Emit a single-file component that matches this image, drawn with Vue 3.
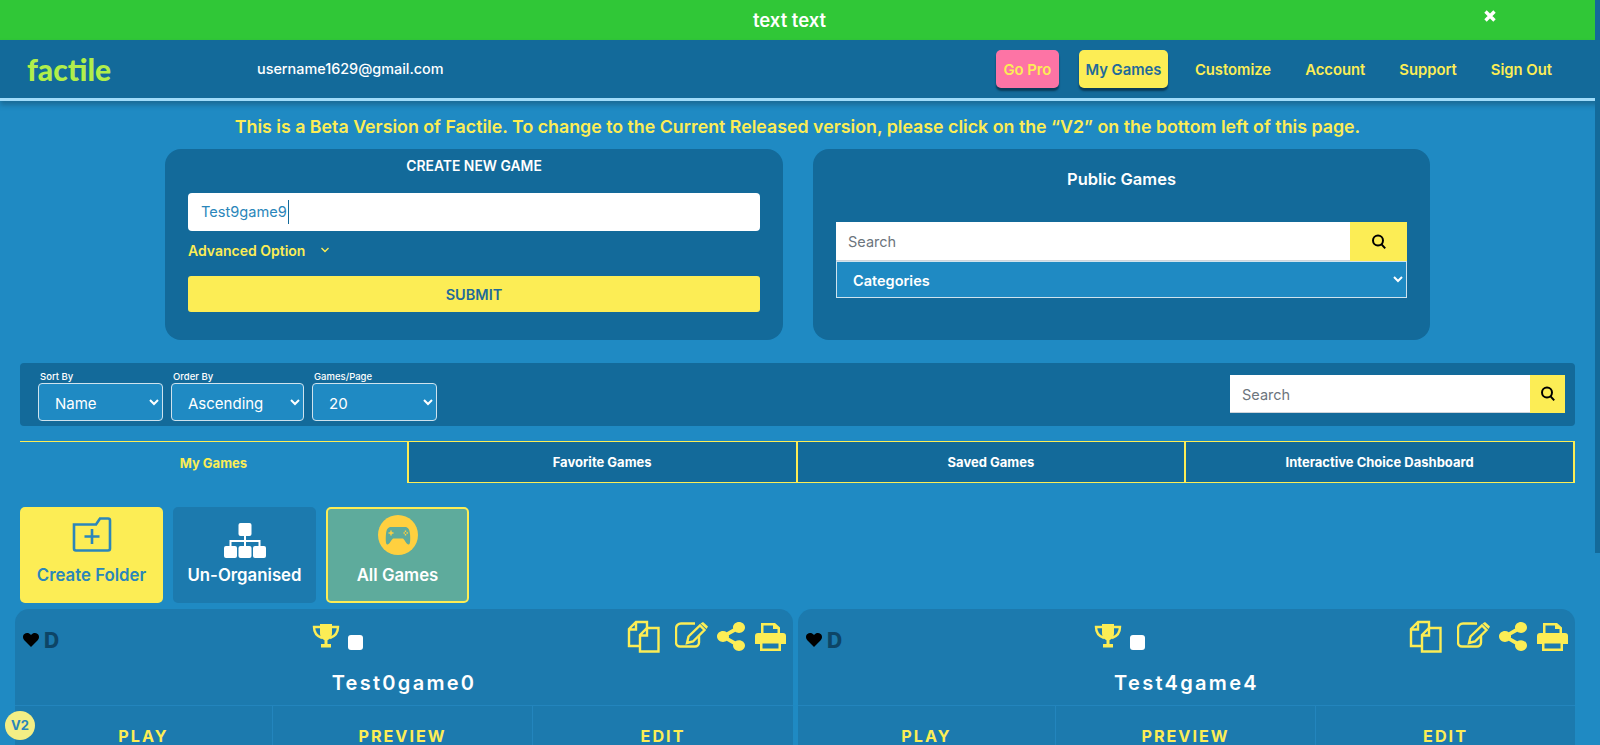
<template>
  <div class="page">
    <div class="promo">
      <span class="promo-text">text text</span>
      <svg class="promo-close" viewBox="0 0 14 14"><path d="M2.500 2.500l9 9M11.500 2.500l-9 9" /></svg>
    </div>

    <header class="topbar">
      <div class="logo">factile</div>
      <div class="email">username1629@gmail.com</div>
      <nav class="nav">
        <a class="nav-btn pro">Go Pro</a>
        <a class="nav-btn mine">My Games</a>
        <a class="nav-link">Customize</a>
        <a class="nav-link">Account</a>
        <a class="nav-link">Support</a>
        <a class="nav-link">Sign Out</a>
      </nav>
    </header>

    <p class="notice">This is a Beta Version of Factile. To change to the Current Released version, please click on the “V2” on the bottom left of this page.</p>

    <section class="panels">
      <div class="panel create">
        <h4>CREATE NEW GAME</h4>
        <div class="name-input">Test9game9<span class="caret"></span></div>
        <div class="advanced">
          <span>Advanced Option</span>
          <svg viewBox="0 0 10 10"><path d="M1.500 3l3.500 3.500L8.500 3" /></svg>
        </div>
        <button class="submit">SUBMIT</button>
      </div>
      <div class="panel public">
        <h4>Public Games</h4>
        <div class="search public-search">
          <input placeholder="Search" />
          <button class="search-btn">
            <svg viewBox="0 0 16 16"><circle cx="7" cy="6.500" r="5" /><path d="M10.600 10.400l3.600 4" /></svg>
          </button>
        </div>
        <select class="categories">
          <option>Categories</option>
        </select>
      </div>
    </section>

    <section class="filters">
      <label class="filter" v-for="f in filters" :key="f.label">
        <span>{{ f.label }}</span>
        <select :style="{ width: f.width + 'px' }">
          <option>{{ f.value }}</option>
        </select>
      </label>
      <div class="search filter-search">
        <input placeholder="Search" />
        <button class="search-btn">
          <svg viewBox="0 0 16 16"><circle cx="7" cy="6.500" r="5" /><path d="M10.600 10.400l3.600 4" /></svg>
        </button>
      </div>
    </section>

    <div class="tabs">
      <div v-for="(t, i) in tabs" :key="t" class="tab" :class="{ active: i === 0 }">{{ t }}</div>
    </div>

    <div class="folders">
      <div class="folder new">
        <svg class="folder-icon" viewBox="0 0 40 36">
          <path d="M2 8.500h22l4-6h8a2 2 0 0 1 2 2v28a2 2 0 0 1-2 2H4a2 2 0 0 1-2-2z" />
          <path d="M20 13v15M12.500 20.500h15" />
        </svg>
        <span>Create Folder</span>
      </div>
      <div class="folder plain">
        <svg class="tree-icon" viewBox="0 0 42 36">
          <rect x="14.500" y="0" width="13" height="13" rx="2" />
          <rect x="0" y="23" width="13" height="12" rx="2" />
          <rect x="14.500" y="23" width="13" height="12" rx="2" />
          <rect x="29" y="23" width="13" height="12" rx="2" />
          <path class="tree-line" d="M21 12v11M6.500 23v-5h29v5" />
        </svg>
        <span>Un-Organised</span>
      </div>
      <div class="folder all">
        <svg class="pad-icon" viewBox="0 0 40 40">
          <circle cx="20" cy="20" r="20" fill="#ffd03f" />
          <path fill="#5eab9c" d="M13 12h14c3 0 4.500 2 5 7 .4 4 .4 10-1 10.500-2.500.5-4-4.500-6-6H15c-2 1.500-3.500 6.500-6 6-1.400-.5-1.400-6.500-1-10.500C8.500 14 10 12 13 12z" />
          <path stroke="#ffd03f" stroke-width="1.400" fill="none" d="M10.500 18h5M13 15.500v5M25.500 18h1.400M28.500 18h1.400M27.500 15.500v1.400M27.500 19v1.400" />
        </svg>
        <span>All Games</span>
      </div>
    </div>

    <div class="games">
      <article class="game" v-for="g in games" :key="g">
        <div class="game-top">
          <div class="fav">
            <svg class="heart" viewBox="0 0 16 14"><path d="M8 14L1.300 7.200C-.5 5.300-.4 2.500 1.400 1 3.100-.4 5.700-.2 7.200 1.300L8 2.100l.8-.8C10.300-.2 12.900-.4 14.600 1c1.800 1.500 1.900 4.300.1 6.200z" /></svg>
            <b>D</b>
          </div>
          <div class="award">
            <svg class="trophy" viewBox="0 0 28 26">
              <path class="fill" d="M8 0h12v9c0 4-2.500 6.500-4.500 7.200V20H19v3.500H9V20h3.500v-3.800C10.500 15.500 8 13 8 9z" />
              <path class="line" d="M8 3H2c0 5 2 9 8 11M20 3h6c0 5-2 9-8 11" />
            </svg>
            <span class="check"></span>
          </div>
          <div class="tools">
            <svg class="copy" viewBox="0 0 33 33">
              <path d="M12 26H2V9l7-7h11v6M9 3v6.500H3" />
              <path d="M13 31.500V15l7-7h11.500v23.500zM20 9v6.500h-6" />
            </svg>
            <svg class="edit" viewBox="0 0 33 26">
              <path d="M20 1.500H6a5 5 0 0 0-5 5v14a4 4 0 0 0 4 4h15a4 4 0 0 0 4-4v-7" />
              <path class="pen" d="M13.500 14.500L25 3.500l4.500 4.500-11.500 11.500-6 1.500z" />
              <path class="pen-head" d="M25.500 1.500l2.500-1.500 5 4.500-1.500 2.500z" />
            </svg>
            <svg class="share" viewBox="0 0 448 512" preserveAspectRatio="none"><path d="M352 320c-22.608 0-43.387 7.819-59.790 20.895l-102.486-64.054a96.551 96.551 0 0 0 0-41.683l102.486-64.054C308.613 184.181 329.392 192 352 192c53.019 0 96-42.981 96-96S405.019 0 352 0s-96 42.981-96 96c0 7.158.79 14.130 2.276 20.841L155.790 180.895C139.387 167.819 118.608 160 96 160c-53.019 0-96 42.981-96 96s42.981 96 96 96c22.608 0 43.387-7.819 59.790-20.895l102.486 64.054A96.301 96.301 0 0 0 256 416c0 53.019 42.981 96 96 96s96-42.981 96-96-42.981-96-96-96z" /></svg>
            <svg class="print" viewBox="0 0 31 29">
              <path d="M6 11V1h14l5 4.500V11h-2.500V7H18V3.500H8.500V11zM3 11h25a3 3 0 0 1 3 3v8h-5v7H5v-7H0v-8a3 3 0 0 1 3-3zM7.500 21.500v5h16v-5z" fill-rule="evenodd" />
            </svg>
          </div>
        </div>
        <h3 class="game-name">{{ g }}</h3>
        <div class="actions">
          <div>PLAY</div>
          <div>PREVIEW</div>
          <div>EDIT</div>
        </div>
      </article>
    </div>

    <div class="v2">V2</div>
    <div class="thumb"></div>
  </div>
</template>

<script setup>
const filters = [
  { label: 'Sort By', value: 'Name', width: 125 },
  { label: 'Order By', value: 'Ascending', width: 133 },
  { label: 'Games/Page', value: '20', width: 125 },
]
const tabs = ['My Games', 'Favorite Games', 'Saved Games', 'Interactive Choice Dashboard']
const games = ['Test0game0', 'Test4game4']
</script>

<style>
html, body {
  margin: 0;
  background: #1f8ac3;
}
</style>

<style scoped>
.page {
  position: relative;
  width: 1600px;
  height: 745px;
  overflow: hidden;
  background: #1f8ac3;
  font-family: Inter, "Open Sans", sans-serif;
  color: #fff;
  box-sizing: border-box;
  padding-right: 5px;
}
.promo {
  height: 40px;
  background: #30c737;
  display: flex;
  align-items: center;
  justify-content: center;
  position: relative;
  padding-right: 16px;
}
.promo-text {
  font-size: 18.5px;
  font-weight: 600;
}
.promo-close {
  position: absolute;
  left: 1483px;
  top: 9px;
  width: 14px;
  height: 14px;
  stroke: #fff;
  stroke-width: 3.4;
  fill: none;
}
.topbar {
  height: 58px;
  background: #136a9a;
  border-bottom: 3px solid #a0dcfa;
  display: flex;
  align-items: center;
  box-shadow: 0 4px 5px rgba(19, 70, 100, 0.45);
  margin-right: -5px;
  padding-right: 5px;
  position: relative;
}
.logo {
  margin-left: 27px;
  width: 230px;
  font-family: Lato, sans-serif;
  font-weight: 900;
  font-size: 30px;
  line-height: 60px;
  color: #b0ee4b;
}
.email {
  font-size: 14.4px;
  font-weight: 500;
  margin-top: -1px;
}
.nav {
  margin-left: auto;
  display: flex;
  align-items: center;
  margin-right: 43px;
  font-size: 14.8px;
  font-weight: 600;
  color: #fced55;
}
.nav-btn {
  height: 38px;
  line-height: 40px;
  text-align: center;
  border-radius: 5px;
  box-shadow: 0 3px 2px #0a3c5a;
}
.pro {
  width: 63px;
  background: #fd74a5;
  margin-right: 20px;
}
.mine {
  width: 89px;
  background: #fced55;
  color: #1f6a9a;
  margin-right: 27px;
}
.nav-link {
  margin-right: 34px;
  padding-top: 2px;
}
.nav-link:last-child {
  margin-right: 0;
}
.notice {
  margin: 0;
  height: 48px;
  line-height: 52px;
  text-align: center;
  color: #fced55;
  font-size: 17.8px;
  font-weight: 600;
}
.panels {
  display: flex;
  gap: 30px;
  padding-left: 165px;
}
.panel {
  width: 617px;
  height: 191px;
  background: #136a9a;
  border-radius: 16px;
  box-sizing: border-box;
  padding: 0 23px;
}
.create {
  width: 618px;
}
.panel h4 {
  margin: 0;
  text-align: center;
  font-weight: 600;
}
.create h4 {
  font-size: 13.9px;
  line-height: 34px;
}
.name-input {
  margin-top: 10px;
  height: 38px;
  background: #fff;
  border-radius: 4px;
  color: #2a86ba;
  font-size: 14.6px;
  line-height: 38px;
  padding-left: 13px;
  display: flex;
  align-items: center;
}
.caret {
  width: 1px;
  height: 24px;
  background: #136a9a;
  margin-left: 1px;
}
.advanced {
  margin-top: 8px;
  height: 22px;
  display: flex;
  align-items: center;
  gap: 15px;
  color: #fced55;
  font-size: 14px;
  font-weight: 600;
}
.advanced svg {
  width: 10px;
  height: 10px;
  fill: none;
  stroke: #fced55;
  stroke-width: 1.4;
}
.submit {
  display: block;
  margin-top: 15px;
  width: 100%;
  height: 36px;
  border: 0;
  border-radius: 3px;
  background: #fced55;
  color: #1f6a9a;
  font-family: inherit;
  font-size: 14.5px;
  font-weight: 600;
}
.public h4 {
  font-size: 16.5px;
  line-height: 60px;
}
.search {
  display: flex;
}
.search input {
  flex: 1;
  min-width: 0;
  border: 0;
  border-bottom: 1px solid #ced4da;
  background: #fff;
  font-family: inherit;
  font-size: 14.5px;
  padding: 1px 12px 0;
  box-sizing: border-box;
  outline: none;
}
.search input::placeholder {
  color: #6c757d;
}
.search-btn {
  border: 0;
  padding: 0;
  background: #fced55;
  display: flex;
  align-items: center;
  justify-content: center;
}
.search-btn svg {
  width: 16px;
  height: 16px;
  fill: none;
  stroke: #000;
  stroke-width: 2;
}
.public-search {
  margin-top: 13px;
  height: 39px;
}
.public-search .search-btn {
  width: 57px;
}
.categories {
  display: block;
  width: 100%;
  height: 37px;
  border: 1px solid #cfe3ee;
  background: #1f8ac3;
  color: #fff;
  font-family: inherit;
  font-size: 14.5px;
  font-weight: 600;
  padding: 1px 0 0 12px;
  outline: none;
}
.filters {
  margin: 23px 20px 0 20px;
  height: 63px;
  background: #136a9a;
  border-radius: 4px;
  display: flex;
  padding: 7px 10px 0 18px;
  box-sizing: border-box;
  gap: 8px;
}
.filter {
  display: flex;
  flex-direction: column;
}
.filter span {
  font-size: 9.5px;
  font-weight: 500;
  line-height: 13px;
  padding-left: 2px;
}
.filter select {
  height: 38px;
  border: 1px solid #cfe3ee;
  border-radius: 4px;
  background: #1f8ac3;
  color: #fff;
  font-family: inherit;
  font-size: 15px;
  padding: 2px 0 0 12px;
  outline: none;
}
.filter-search {
  margin-left: auto;
  margin-top: 5px;
  width: 335px;
  height: 38px;
}
.filter-search .search-btn {
  width: 35px;
}
.tabs {
  margin: 15px 20px 0 20px;
  height: 42px;
  display: grid;
  grid-template-columns: repeat(4, 1fr);
}
.tab {
  background: #136a9a;
  border-top: 1px solid #fced55;
  border-right: 2px solid #fced55;
  border-bottom: 1px solid #fced55;
  box-sizing: border-box;
  display: flex;
  align-items: center;
  justify-content: center;
  font-size: 13px;
  font-weight: 700;
}
.tab.active {
  background: transparent;
  color: #fced55;
  border-bottom: 0;
}
.folders {
  margin: 24px 0 0 20px;
  display: flex;
  gap: 10px;
}
.folder {
  width: 143px;
  height: 96px;
  border-radius: 5px;
  box-sizing: border-box;
  display: flex;
  flex-direction: column;
  align-items: center;
  font-size: 16.8px;
  font-weight: 600;
  position: relative;
}
.folder span {
  position: absolute;
  top: 57px;
  line-height: 22px;
}
.new {
  background: #fced55;
  color: #2a86ba;
}
.plain {
  background: #1c7aae;
}
.all {
  background: #5eab9c;
  border: 2px solid #fced55;
}
.all span {
  top: 55px;
}
.folder-icon {
  margin-top: 9px;
  width: 40px;
  height: 36px;
  fill: none;
  stroke: #2a86ba;
  stroke-width: 2.6;
}
.tree-icon {
  margin-top: 16px;
  width: 42px;
  height: 36px;
  fill: #fff;
}
.tree-line {
  fill: none;
  stroke: #fff;
  stroke-width: 2;
}
.pad-icon {
  margin-top: 6px;
  width: 40px;
  height: 40px;
}
.games {
  margin: 6px 0 0 15px;
  display: flex;
  gap: 5px;
}
.game {
  width: 778px;
  height: 136px;
  flex: none;
  background: #1c7aae;
  border-radius: 14px 14px 0 0;
}
.game + .game {
  width: 777px;
}
.game-top {
  height: 48px;
  padding: 11px 7px 0 8px;
  display: flex;
  justify-content: space-between;
  box-sizing: border-box;
}
.fav {
  display: flex;
  align-items: center;
  gap: 5px;
  height: 40px;
}
.heart {
  width: 16px;
  height: 14px;
  fill: #000;
}
.fav b {
  font-size: 21px;
  font-weight: 800;
  color: #0d4566;
}
.award {
  display: flex;
  align-items: flex-end;
  gap: 8px;
  height: 30px;
  margin-left: -12px;
}
.trophy {
  width: 28px;
  height: 26px;
}
.trophy .fill {
  fill: #fced55;
}
.trophy .line {
  fill: none;
  stroke: #fced55;
  stroke-width: 2.4;
}
.check {
  width: 15px;
  height: 15px;
  background: #fff;
  border-radius: 3px;
}
.tools {
  display: flex;
  align-items: flex-start;
  gap: 10px;
}
.tools svg {
  flex: none;
  display: block;
}
.copy, .edit {
  fill: none;
  stroke: #fced55;
  stroke-width: 2.4;
}
.copy {
  width: 33px;
  height: 33px;
}
.edit {
  width: 33px;
  height: 26px;
  margin: 2px -1px 0 5px;
}
.edit .pen {
  stroke-width: 2.4;
}
.edit .pen-head {
  fill: #fced55;
  stroke: none;
}
.share {
  width: 28px;
  height: 29px;
  fill: #fced55;
  margin-top: 2px;
}
.print {
  width: 31px;
  height: 29px;
  fill: #fced55;
  margin-top: 2px;
}
.game-name {
  margin: 0;
  height: 48px;
  text-align: center;
  font-size: 20px;
  font-weight: 600;
  letter-spacing: 2.3px;
  line-height: 52px;
}
.actions {
  border-top: 1px solid #2385bd;
  display: grid;
  grid-template-columns: 258px 260px 1fr;
  height: 39px;
}
.actions div {
  text-align: center;
  color: #fced55;
  font-size: 16.2px;
  font-weight: 700;
  letter-spacing: 2px;
  line-height: 18px;
  padding-top: 21px;
  border-right: 1px solid #2385bd;
}
.actions div:last-child {
  border-right: 0;
}
.v2 {
  position: absolute;
  left: 5px;
  top: 711px;
  width: 30px;
  height: 29px;
  border-radius: 50%;
  background: #f3ee85;
  color: #2a86ba;
  font-size: 13px;
  font-weight: 700;
  line-height: 29px;
  text-align: center;
}
.thumb {
  position: absolute;
  right: 0;
  top: 0;
  width: 5px;
  height: 553px;
  background: #136a9a;
}
</style>
